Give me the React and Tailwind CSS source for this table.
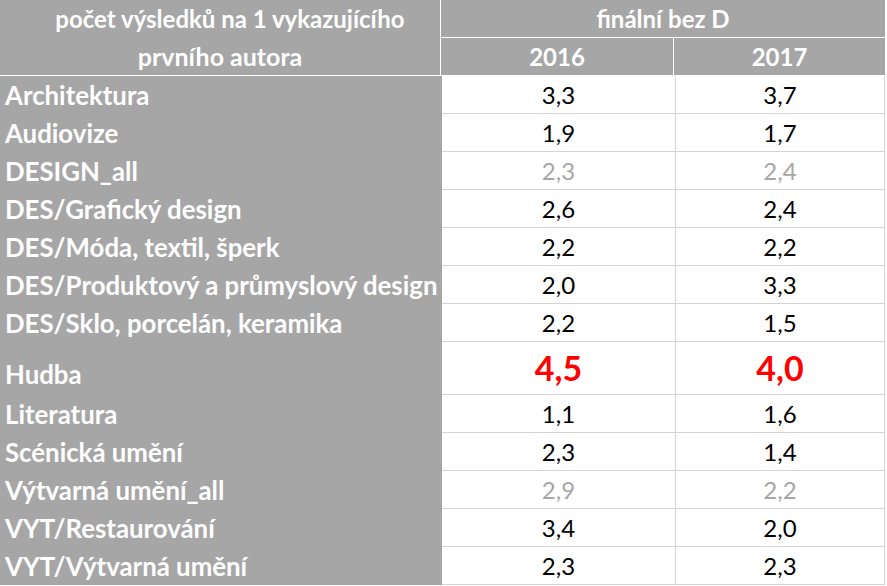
import React from "react";

const rows = [
  ["Architektura", "3,3", "3,7"],
  ["Audiovize", "1,9", "1,7"],
  ["DESIGN_all", "2,3", "2,4", "muted"],
  ["DES/Grafický design", "2,6", "2,4"],
  ["DES/Móda, textil, šperk", "2,2", "2,2"],
  ["DES/Produktový a průmyslový design", "2,0", "3,3"],
  ["DES/Sklo, porcelán, keramika", "2,2", "1,5"],
  ["Hudba", "4,5", "4,0", "red"],
  ["Literatura", "1,1", "1,6"],
  ["Scénická umění", "2,3", "1,4"],
  ["Výtvarná umění_all", "2,9", "2,2", "muted"],
  ["VYT/Restaurování", "3,4", "2,0"],
  ["VYT/Výtvarná umění", "2,3", "2,3"],
];

function Row({ label, a, b, kind }) {
  const tall = kind === "red";
  const valCls =
    kind === "red"
      ? "text-[34px] font-bold text-[#ff0000]"
      : kind === "muted"
      ? "text-[24px] text-[#a6a6a6]"
      : "text-[24px] text-black";
  return (
    <div className={`flex ${tall ? "h-[53px]" : "h-[38px]"}`}>
      <div
        className={`w-[442px] bg-[#a6a6a6] text-white font-bold text-[25.8px] flex items-center pl-[5px] whitespace-nowrap leading-none ${
          tall ? "pt-[12px]" : "pt-[2px]"
        }`}
      >
        {label}
      </div>
      <div className={`w-[234px] border-r border-b border-[#d4d4d4] flex items-center justify-center leading-none ${valCls}`}>
        {a}
      </div>
      <div className={`w-[209px] border-r border-b border-[#d4d4d4] flex items-center justify-center leading-none ${valCls}`}>
        {b}
      </div>
    </div>
  );
}

export default function App() {
  return (
    <div
      className="w-[887px] h-[586px] bg-white overflow-hidden"
      style={{ fontFamily: "Lato, 'Open Sans', sans-serif" }}
    >
      <div className="flex h-[76px] bg-[#a6a6a6] text-white font-bold text-[24px] leading-none border-b border-white w-[885px]">
        <div className="w-[441px] border-r border-white flex flex-col">
          <div className="h-[38px] flex items-center justify-center pl-[20px]">počet výsledků na 1 vykazujícího</div>
          <div className="flex-1 flex items-center justify-center text-[25px]">prvního autora</div>
        </div>
        <div className="flex-1 flex flex-col">
          <div className="h-[38px] border-b border-white flex items-center justify-center">finální bez D</div>
          <div className="flex-1 flex">
            <div className="w-[233px] border-r border-white flex items-center justify-center">2016</div>
            <div className="flex-1 flex items-center justify-center">2017</div>
          </div>
        </div>
      </div>
      {rows.map((r) => (
        <Row key={r[0]} label={r[0]} a={r[1]} b={r[2]} kind={r[3]} />
      ))}
    </div>
  );
}
